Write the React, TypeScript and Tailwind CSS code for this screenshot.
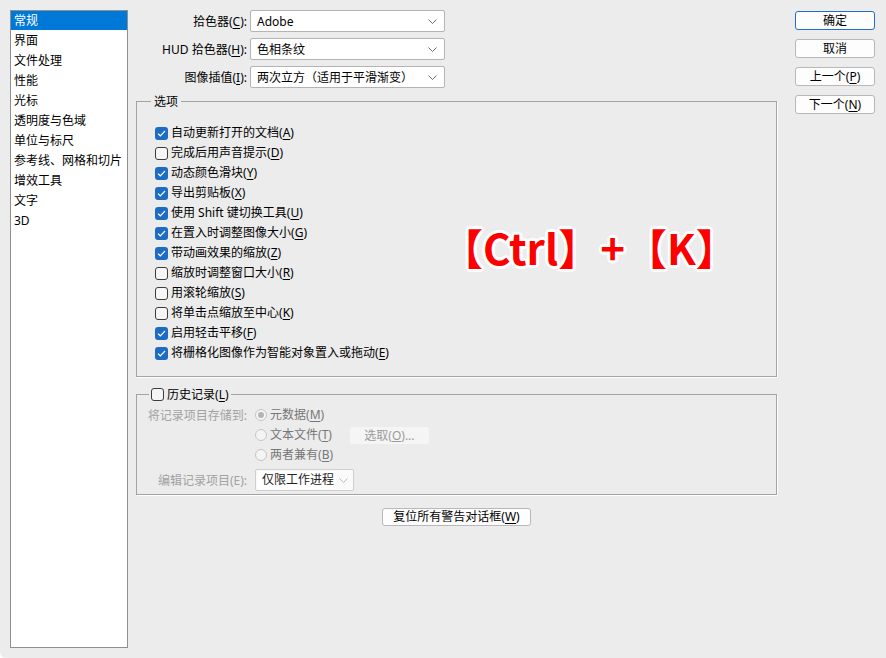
import React from "react";

const navItems = [
  "常规",
  "界面",
  "文件处理",
  "性能",
  "光标",
  "透明度与色域",
  "单位与标尺",
  "参考线、网格和切片",
  "增效工具",
  "文字",
  "3D",
];

const options: [string, string, boolean][] = [
  ["自动更新打开的文档", "A", true],
  ["完成后用声音提示", "D", false],
  ["动态颜色滑块", "Y", true],
  ["导出剪贴板", "X", true],
  ["使用 Shift 键切换工具", "U", true],
  ["在置入时调整图像大小", "G", true],
  ["带动画效果的缩放", "Z", true],
  ["缩放时调整窗口大小", "R", false],
  ["用滚轮缩放", "S", false],
  ["将单击点缩放至中心", "K", false],
  ["启用轻击平移", "F", true],
  ["将栅格化图像作为智能对象置入或拖动", "E", true],
];

const Mn = ({ text, k }: { text: string; k: string }) => (
  <span>
    {text}(<u className="underline-offset-2">{k}</u>)
  </span>
);

const Chevron = ({ color = "#6b6b6b" }: { color?: string }) => (
  <svg width="9" height="5" viewBox="0 0 9 5" fill="none">
    <path d="M0.5 0.5 L4.5 4.5 L8.5 0.5" stroke={color} strokeWidth="1" />
  </svg>
);

const Checkbox = ({ checked }: { checked: boolean }) =>
  checked ? (
    <span className="w-[13px] h-[13px] rounded-[3px] bg-[#1c6cc4] flex items-center justify-center shrink-0">
      <svg width="9" height="7" viewBox="0 0 9 7" fill="none">
        <path d="M1 3.6 L3.3 5.8 L8 1" stroke="#fff" strokeWidth="1.2" />
      </svg>
    </span>
  ) : (
    <span className="w-[13px] h-[13px] rounded-[3px] border border-[#3c3c3c] bg-[#f6f6f6] shrink-0" />
  );

const Radio = ({ on }: { on?: boolean }) => (
  <span className="w-[12px] h-[12px] rounded-full border border-[#c6c6c6] bg-[#f4f4f4] flex items-center justify-center shrink-0">
    {on && <span className="w-[6px] h-[6px] rounded-full bg-[#b4b4b4]" />}
  </span>
);

const Select = ({ value }: { value: string }) => (
  <div className="w-[195px] h-[22px] bg-white border border-[#b4b4b4] rounded-[2px] flex items-center justify-between pl-[6px] pr-[7px]">
    <span className="pt-[1px]">{value}</span>
    <Chevron />
  </div>
);

const SideButton = ({ children, primary }: { children: React.ReactNode; primary?: boolean }) => (
  <div
    className={`h-[19px] w-[80px] rounded-[3px] bg-[#fdfdfd] flex items-center justify-center leading-[17px] ${
      primary ? "border border-[#1f6fc9]" : "border border-[#b8b8b8]"
    }`}
  >
    {children}
  </div>
);

export default function App() {
  return (
    <div className="w-[886px] h-[658px] bg-[#ececec] flex items-start text-[12px] leading-[20px] text-black font-['Noto_Sans','Noto_Sans_CJK_SC',sans-serif] overflow-hidden rounded-bl-[6px]">
      {/* category list */}
      <div className="ml-[10px] mt-[10px] w-[118px] h-[638px] bg-white border border-[#8f8f8f]">
        {navItems.map((n, i) => (
          <div
            key={n}
            className={`pl-[3px] ${i === 0 ? "bg-[#0078d7] text-white h-[19px] leading-[20px]" : "h-[20px] leading-[21px]"}`}
          >
            {n}
          </div>
        ))}
      </div>

      {/* main column */}
      <div className="ml-[8px] w-[641px] pt-[10px] flex flex-col">
        <div className="flex flex-col gap-[6px]">
          {[
            ["拾色器", "C", "Adobe"],
            ["HUD 拾色器", "H", "色相条纹"],
            ["图像插值", "I", "两次立方（适用于平滑渐变）"],
          ].map(([l, k, v]) => (
            <div key={k} className="flex items-center gap-[3px]">
              <div className="w-[111px] text-right pt-[1px]">
                <Mn text={l} k={k} />:
              </div>
              <Select value={v} />
            </div>
          ))}
        </div>

        <fieldset className="relative mt-[5px] border border-[#a3a3a3] shadow-[1px_1px_0_#fff] pl-[18px] pt-[14px] pb-[13px]">
          <legend className="px-[3px] -ml-[4px] leading-[16px]">
            <span className="inline-block translate-y-[1px]">选项</span>
          </legend>
          <div className="flex flex-col">
            {options.map(([t, k, c]) => (
              <div key={k} className="h-[20px] flex items-center gap-[3px]">
                <Checkbox checked={c} />
                <Mn text={t} k={k} />
              </div>
            ))}
          </div>
          <div className="absolute left-[304px] top-[113px] text-[42px] leading-[50px] font-bold text-[#ff0000] font-['Noto_Sans_CJK_SC',sans-serif] [text-shadow:2px_0_#fff,-2px_0_#fff,0_2px_#fff,0_-2px_#fff,2px_2px_#fff,-2px_-2px_#fff,2px_-2px_#fff,-2px_2px_#fff,3px_0_#fff,-3px_0_#fff,0_3px_#fff,0_-3px_#fff] whitespace-nowrap">
            【Ctrl】+【K】
          </div>
        </fieldset>

        <fieldset className="mt-[9px] border border-[#a3a3a3] shadow-[1px_1px_0_#fff] pt-[3px] pb-[3px]">
          <legend className="ml-[12px] px-[2px] leading-[16px] flex items-center gap-[3px]">
            <Checkbox checked={false} />
            <span className="inline-block translate-y-[1px]">
              <Mn text="历史记录" k="L" />
            </span>
          </legend>
          <div className="flex">
            <div className="w-[110px] text-right text-[#a2a2a2] pt-[1px]">将记录项目存储到:</div>
            <div className="ml-[8px] flex flex-col text-[#777]">
              <div className="h-[20px] flex items-center gap-[3px]">
                <Radio on />
                <Mn text="元数据" k="M" />
              </div>
              <div className="h-[20px] flex items-center gap-[3px]">
                <Radio />
                <Mn text="文本文件" k="T" />
                <div className="ml-[15px] w-[79px] h-[17px] bg-[#f5f5f5] rounded-[2px] flex items-center justify-center text-[#9a9a9a] leading-[17px]">
                  选取(<u>O</u>)...
                </div>
              </div>
              <div className="h-[20px] flex items-center gap-[3px]">
                <Radio />
                <Mn text="两者兼有" k="B" />
              </div>
            </div>
          </div>
          <div className="mt-[4px] flex items-center">
            <div className="w-[110px] text-right text-[#a2a2a2] pt-[1px]">编辑记录项目(E):</div>
            <div className="ml-[8px] w-[99px] h-[22px] border border-[#cfcfcf] bg-[#fafafa] rounded-[2px] flex items-center">
              <span className="ml-[2px] pl-[4px] pr-[2px] bg-white text-[#222] leading-[18px]">仅限工作进程</span>
              <span className="ml-auto mr-[5px]">
                <Chevron color="#bdbdbd" />
              </span>
            </div>
          </div>
        </fieldset>

        <div className="mt-[13px] self-center w-[149px] h-[18px] border border-[#b8b8b8] rounded-[3px] bg-[#fdfdfd] flex items-center justify-center leading-[16px]">
          <Mn text="复位所有警告对话框" k="W" />
        </div>
      </div>

      {/* right buttons */}
      <div className="ml-[18px] pt-[11px] flex flex-col gap-[9px]">
        <SideButton primary>确定</SideButton>
        <SideButton>取消</SideButton>
        <SideButton>
          <Mn text="上一个" k="P" />
        </SideButton>
        <SideButton>
          <Mn text="下一个" k="N" />
        </SideButton>
      </div>
    </div>
  );
}
